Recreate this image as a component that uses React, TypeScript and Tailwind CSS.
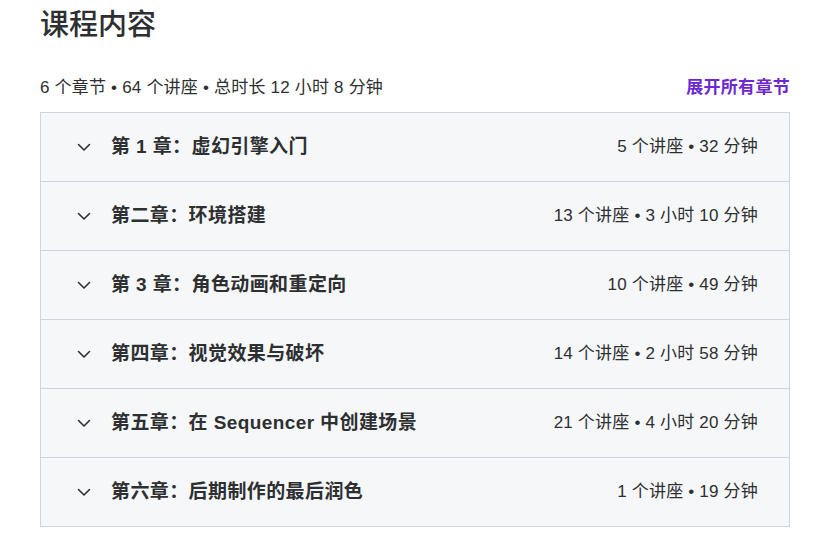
const sections = [
  { title: "第 1 章：虚幻引擎入门", meta: "5 个讲座 • 32 分钟" },
  { title: "第二章：环境搭建", meta: "13 个讲座 • 3 小时 10 分钟" },
  { title: "第 3 章：角色动画和重定向", meta: "10 个讲座 • 49 分钟" },
  { title: "第四章：视觉效果与破坏", meta: "14 个讲座 • 2 小时 58 分钟" },
  { title: "第五章：在 Sequencer 中创建场景", meta: "21 个讲座 • 4 小时 20 分钟" },
  { title: "第六章：后期制作的最后润色", meta: "1 个讲座 • 19 分钟" },
];

const Chevron = () => (
  <svg width="14" height="14" viewBox="0 0 14 14" fill="none" stroke="#2d2f31" strokeWidth="1.6" strokeLinecap="round" strokeLinejoin="round">
    <path d="M1.5 4.5L7 10l5.5-5.5" />
  </svg>
);

export default function App() {
  return (
    <div
      className="bg-white text-[#2d2f31] px-10 w-[836px] h-[545px]"
      style={{ fontFamily: '"Liberation Sans", "Noto Sans CJK SC", sans-serif' }}
    >
      <h2 className="pt-[7px] text-[29px] leading-[36px] font-medium">课程内容</h2>
      <div className="w-[750px] mt-[30px] flex items-center justify-between h-[30px]">
        <span className="text-[17px] tracking-[0.2px]">6 个章节 • 64 个讲座 • 总时长 12 小时 8 分钟</span>
        <button className="text-[17px] font-bold text-[#6d28d2] tracking-[0.3px]">展开所有章节</button>
      </div>
      <div className="w-[750px] mt-[9px] border border-[#d1d2e0]">
        {sections.map((s, i) => (
          <div
            key={i}
            className={
              "bg-[#f6f7f9] flex items-center pl-[36px] pr-[31px] " +
              (i > 0 ? "h-[69px] border-t border-[#d1d2e0]" : "h-[68px]")
            }
          >
            <Chevron />
            <span className="ml-[20px] text-[19px] font-bold flex-1 tracking-[0.4px]">{s.title}</span>
            <span className="text-[17px] tracking-[0.2px]">{s.meta}</span>
          </div>
        ))}
      </div>
    </div>
  );
}
